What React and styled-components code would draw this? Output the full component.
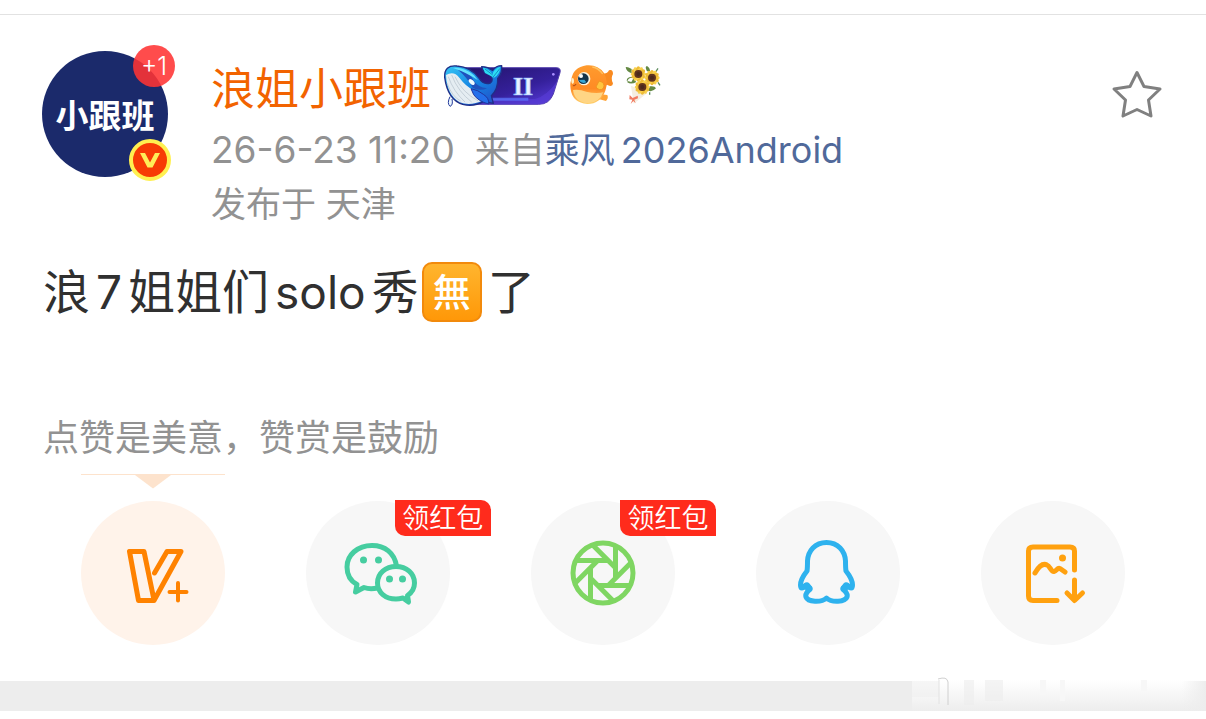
import styled, { createGlobalStyle } from "styled-components";

export default function App() {
  return (
    <>
      <GlobalStyle />
      <StyledPost>
        <StyledHeader>
          <Avatar />
          <StyledInfo>
            <StyledNameRow>
              <StyledName href="#profile">浪姐小跟班</StyledName>
              <StyledBadges>
                <WhaleBadge />
                <FishBadge />
                <FlowerBadge />
              </StyledBadges>
            </StyledNameRow>
            <StyledMeta>
              <StyledTime>26-6-23 11:20</StyledTime>
              <span>
                来自
                <StyledSource href="#source">
                  乘风<StyledClient>2026Android</StyledClient>
                </StyledSource>
              </span>
            </StyledMeta>
            <StyledMeta>发布于 天津</StyledMeta>
          </StyledInfo>
          <StyledFavourite type="button" aria-label="收藏">
            <svg width="52" height="52" viewBox="0 0 52 52" fill="none">
              <path
                d="M26 4.500L33 18.500L49 21L37.500 32L40 48L26 41.500L12 48L14.500 32L3 21L19 18.500Z"
                stroke="#808080"
                strokeWidth="3"
                strokeLinejoin="round"
              />
            </svg>
          </StyledFavourite>
        </StyledHeader>

        <StyledText>
          浪<StyledLatin>7</StyledLatin>姐姐们<StyledLatin>solo</StyledLatin>秀
          <StyledEmoji>無</StyledEmoji>了
        </StyledText>

        <StyledTip>点赞是美意，赞赏是鼓励</StyledTip>

        <StyledActions>
          {actions.map(({ id, label, icon, active, tag }) => (
            <StyledAction key={id}>
              <StyledPointer width="144" height="15" viewBox="0 0 144 15" $visible={active}>
                <path d="M0 0H144V1H90L72 14.500L54 1H0Z" fill="#fde3cd" />
              </StyledPointer>
              <StyledCircle type="button" aria-label={label} $active={active}>
                {icon}
                {tag ? <StyledTag>{tag}</StyledTag> : ""}
              </StyledCircle>
            </StyledAction>
          ))}
        </StyledActions>
      </StyledPost>
      <StyledDivider>
        <Watermark />
      </StyledDivider>
    </>
  );
}

function Avatar() {
  return (
    <StyledAvatar>
      小跟班
      <StyledPlusOne>+1</StyledPlusOne>
      <StyledVerified>
        <svg width="22" height="20" viewBox="0 0 22 20">
          <path d="M1 3H6L11 12.500L16 3H21L13.500 17.500H8.500Z" fill="#ffee58" />
        </svg>
      </StyledVerified>
    </StyledAvatar>
  );
}

function WhaleBadge() {
  return (
    <svg width="118" height="46" viewBox="39 36 354 138">
      <defs>
        <linearGradient id="pill" x1="0" y1="0" x2="1" y2="1">
          <stop offset="0" stopColor="#211265" />
          <stop offset="0.6" stopColor="#35209b" />
          <stop offset="1" stopColor="#5b3fe0" />
        </linearGradient>
        <linearGradient id="whale" x1="0" y1="0" x2="1" y2="1">
          <stop offset="0" stopColor="#35c8f5" />
          <stop offset="0.5" stopColor="#1684e2" />
          <stop offset="1" stopColor="#2545c4" />
        </linearGradient>
      </defs>
      <path
        d="M70 53H378Q394 53 390 68L370 132Q358 163 326 163H100Z"
        fill="url(#pill)"
        stroke="#5643ae"
        strokeWidth="3"
      />
      <path d="M170 147H315Q350 138 380 96Q365 163 326 163H150Z" fill="#5a3dd8" opacity="0.6" />
      <path d="M185 143H295V152H180Z" fill="#5c79ff" opacity="0.7" />
      <circle cx="370" cy="73" r="4" fill="#a98dff" />
      <text
        x="279"
        y="135"
        textAnchor="middle"
        fontFamily="'Liberation Serif', serif"
        fontWeight="700"
        fontSize="78"
        fill="#e8f3ff"
        stroke="#91b7ff"
        strokeWidth="2"
      >
        II
      </text>
      <path d="M60 140Q50 160 60 169Q70 166 66 147" fill="#eaf6ff" stroke="#263b9c" strokeWidth="3" />
      <path
        d="M44 82Q42 44 81 48Q122 51 146 83Q160 106 181 99Q192 92 181 75Q158 71 155 50Q174 51 188 61Q198 47 215 47Q218 69 203 85Q205 117 184 137L190 160L160 155Q132 171 98 163Q53 149 44 82Z"
        fill="url(#whale)"
        stroke="#202e86"
        strokeWidth="4"
        strokeLinejoin="round"
      />
      <path d="M48 75Q71 61 88 83Q109 111 130 119Q142 143 159 151Q121 170 89 157Q51 135 48 75Z" fill="#e5edf2" />
      <path
        d="M55 80Q70 124 105 156M65 75Q84 125 125 156M75 80Q96 127 145 153M51 99Q66 140 92 153"
        fill="none"
        stroke="#b3c0ca"
        strokeWidth="2"
      />
      <path d="M123 116Q145 120 160 133Q178 144 176 162Q145 154 131 134Z" fill="#246fea" stroke="#20359e" strokeWidth="3" />
      <path d="M82 58Q121 66 132 93Q144 112 171 115Q151 125 128 113Q112 83 82 58Z" fill="#2052bd" />
      <path d="M69 54Q102 50 132 76L144 91Q111 68 69 54Z" fill="#63e2fc" />
      <ellipse cx="125" cy="96" rx="11" ry="6" transform="rotate(45 125 96)" fill="#effcff" />
      <path d="M159 53Q177 56 188 73Q190 56 211 50Q211 72 192 83Q175 74 165 69Z" fill="#2cdcf3" />
      <path d="M188 83L210 55M188 75L165 57" stroke="#168cc5" strokeWidth="3" />
    </svg>
  );
}

function FishBadge() {
  return (
    <svg width="46" height="46" viewBox="414 40 138 138">
      <defs>
        <linearGradient id="fish" x1="0" y1="0" x2="0" y2="1">
          <stop offset="0" stopColor="#ff9b2e" />
          <stop offset="0.6" stopColor="#ff8b24" />
          <stop offset="1" stopColor="#ffd16c" />
        </linearGradient>
      </defs>
      <path d="M500 66Q524 84 534 65Q546 61 546 76Q538 89 546 104Q545 117 528 108L500 132Z" fill="#f98a20" />
      <path d="M510 137L529 139Q533 149 525 157L500 150Z" fill="#ffa335" />
      <path
        d="M421 94Q425 56 467 50Q500 47 519 73Q533 99 523 126Q509 165 469 166Q424 162 419 122Q416 104 421 94Z"
        fill="url(#fish)"
      />
      <path d="M426 124Q445 121 466 129Q493 136 517 131Q505 163 470 164Q430 159 426 124Z" fill="#ffd584" />
      <path d="M484 55Q503 58 515 76" fill="none" stroke="#ffc260" strokeWidth="4" />
      <path d="M504 97Q525 102 517 119Q506 129 495 115Z" fill="#ffc43e" stroke="#f19521" strokeWidth="3" />
      <ellipse cx="459" cy="90" rx="19" ry="20" fill="#fff5de" />
      <circle cx="457" cy="90" r="16" fill="#17354b" />
      <path d="M444 94Q452 108 466 101L460 93Z" fill="#38a7d5" />
      <circle cx="450" cy="82" r="6" fill="#fff" />
      <ellipse cx="425" cy="97" rx="4" ry="9" fill="#fff0c5" />
      <path d="M426 110Q431 113 435 106" fill="none" stroke="#bd5214" strokeWidth="4" />
    </svg>
  );
}

const flowers = [
  { x: 622, y: 76 },
  { x: 663, y: 87 },
  { x: 634, y: 115 },
];

const petals = [0, 30, 60, 90, 120, 150];

function FlowerBadge() {
  return (
    <svg width="40" height="46" viewBox="576 40 120 138">
      <path d="M600 111L650 132L608 165Z" fill="#f5eee0" />
      <path
        d="M602 61Q588 53 584 56Q586 69 602 74ZM606 87Q589 86 589 101Q600 109 616 100ZM647 66Q641 53 648 52Q659 58 657 73ZM657 113Q672 111 675 119Q662 133 650 125ZM601 100L587 96Q588 82 609 86Z"
        fill="#648943"
      />
      <path d="M674 70L681 59M681 101L687 110M656 131V138" stroke="#5c8b5d" strokeWidth="4" />
      {flowers.map(({ x, y }) => (
        <g key={x}>
          {petals.map((angle) => (
            <ellipse
              key={angle}
              cx={x}
              cy={y}
              rx="23"
              ry="9"
              transform={`rotate(${angle} ${x} ${y})`}
              fill={angle % 60 ? "#eebb35" : "#f9d04c"}
            />
          ))}
          <circle cx={x} cy={y} r="12" fill="#60331e" />
          <circle cx={x} cy={y} r="6" fill="#4a291c" />
        </g>
      ))}
      <path d="M605 148L596 139L595 152L604 153L599 166L607 157L614 164L610 153L621 149L620 141Z" fill="#f17b60" />
    </svg>
  );
}

function VipIcon() {
  return (
    <StyledIcon viewBox="0 0 144 144" stroke="#ff8200">
      <path d="M73.500 72L86 50.500H100L73 99.500H57.500L48.500 50.500H63L73 99" />
      <path d="M97 82V99.500M88.500 91H105.500" strokeWidth="4" />
    </StyledIcon>
  );
}

function WechatIcon() {
  return (
    <StyledIcon viewBox="0 0 144 144" stroke="#46cda0">
      <path d="M90.500 65C88.500 52 79 44.500 66 44.500C51.500 44.500 41 54 41 66C41 73.500 44.500 80 51 83.500L49.500 91L58 86.500C62 88 67 88 71.500 87" />
      <path d="M90 65.500C79.500 65.500 71.500 72.500 71.500 82C71.500 91.500 79.500 98 90 98C92.500 98 95 97.500 97 97L102.500 101L101.500 94.500C106 91.500 108.500 87 108.500 82C108.500 72.500 100.500 65.500 90 65.500Z" />
      <g fill="#46cda0" stroke="none">
        <circle cx="57.500" cy="59" r="3.500" />
        <circle cx="72.500" cy="59" r="3.500" />
        <circle cx="83.500" cy="78" r="3.500" />
        <circle cx="96.500" cy="78" r="3.500" />
      </g>
    </StyledIcon>
  );
}

const blades = [0, 45, 90, 135, 180, 225, 270, 315];

function MomentsIcon() {
  return (
    <StyledIcon viewBox="0 0 144 144" stroke="#7fd662">
      <circle cx="72" cy="72" r="30" />
      {blades.map((angle) => (
        <path key={angle} d="M46 59.500H76" transform={`rotate(${angle} 72 72)`} />
      ))}
    </StyledIcon>
  );
}

function QqIcon() {
  return (
    <StyledIcon viewBox="0 0 144 144" stroke="#2eb2ee">
      <path d="M70.500 41.500C59 41.500 52 50 51.500 60C51.500 64 51.500 67 51 70C47 75 44.500 79 44.500 84C44.500 88 46.500 88 50 84L54 87C53 90 48.500 92 50 96C52 101 65 102 70.500 97C76 102 89 101 91 96C92.500 92 88 90 87 87L91 84C94.500 88 96.500 88 96.500 84C96.500 79 94 75 90 70C89.500 67 89.500 64 89.500 60C89 50 82 41.500 70.500 41.500Z" />
      <path d="M51 85L53 88M90 85L88 88" strokeWidth="7" />
    </StyledIcon>
  );
}

function SaveImageIcon() {
  return (
    <StyledIcon viewBox="0 0 144 144" stroke="#ffa10f">
      <path d="M93.500 69V50Q93.500 46 89 46H52Q47.500 46 47.500 50V95Q47.500 99.500 52 99.500H76" />
      <path d="M54 72C58 65 62 62 66 64C69 65 70 71 73 70.500C76 70 76 66.500 79 67.500L84 71" />
      <path d="M93.500 79V99M86 92L93.500 99.500L101.500 92" />
      <circle cx="81.500" cy="57" r="3.500" fill="#ffa10f" stroke="none" />
    </StyledIcon>
  );
}

// faded account mark at the end of the divider
function Watermark() {
  return (
    <svg width="294" height="34" viewBox="0 0 294 34" aria-hidden="true">
      <defs>
        <linearGradient id="fade" x1="0" y1="0" x2="0" y2="1">
          <stop offset="0" stopColor="#fff" />
          <stop offset="1" stopColor="#ededed" />
        </linearGradient>
        <linearGradient id="edge" x1="0" y1="0" x2="1" y2="0">
          <stop offset="0" stopColor="#ededed" stopOpacity="0" />
          <stop offset="1" stopColor="#ededed" />
        </linearGradient>
      </defs>
      <path d="M0 3H294V34H0Z" fill="url(#fade)" />
      <path d="M270 4H294V34H270Z" fill="url(#edge)" />
      <path d="M0 4H27V20H0Z" fill="#ededed" opacity="0.5" />
      <path d="M52 3H62V28H52ZM73 3H91V24H73Z" fill="#ededed" opacity="0.6" />
      <path d="M128 3H134V18H128ZM148 3H153V24H148ZM229 3H235V14H229Z" fill="#f7f7f7" />
      <path d="M26 2Q35 -1 36 5V28" stroke="#d0d0d0" fill="none" />
      <path d="M27 3V27" stroke="#e2e2e2" />
    </svg>
  );
}

const actions = [
  { id: "vip", label: "V+", icon: <VipIcon />, active: true },
  { id: "wechat", label: "微信", icon: <WechatIcon />, tag: "领红包" },
  { id: "moments", label: "朋友圈", icon: <MomentsIcon />, tag: "领红包" },
  { id: "qq", label: "QQ", icon: <QqIcon /> },
  { id: "image", label: "保存图片", icon: <SaveImageIcon /> },
];

const GlobalStyle = createGlobalStyle`
  * {
    box-sizing: border-box;
  }
  body {
    margin: 0;
    padding: 14px 0 8px;
    background: #fff;
    font-family: Inter, "Noto Sans CJK SC", sans-serif;
    font-weight: 400;
  }
  button {
    padding: 0;
    border: 0;
    background: none;
    font: inherit;
  }
  a {
    text-decoration: none;
  }
  svg {
    display: block;
    flex: none;
  }
`;

const StyledPost = styled.article`
  border-top: 1px solid #e2e2e2;
  padding: 36px 40px;
`;

const StyledHeader = styled.header`
  display: flex;
  align-items: flex-start;
  padding: 0 2px;
`;

const StyledAvatar = styled.div`
  position: relative;
  display: flex;
  flex: none;
  align-items: center;
  justify-content: center;
  width: 126px;
  height: 126px;
  border-radius: 50%;
  background: #1b2a6b;
  color: #fff;
  font-size: 33px;
  font-weight: 700;
`;

const StyledPlusOne = styled.span`
  position: absolute;
  top: -6px;
  right: -7px;
  width: 42px;
  border-radius: 50%;
  background: rgba(255, 51, 51, 0.88);
  font-size: 25px;
  font-weight: 300;
  line-height: 42px;
  text-align: center;
`;

const StyledVerified = styled.span`
  position: absolute;
  right: -3px;
  bottom: -4px;
  display: flex;
  align-items: center;
  justify-content: center;
  width: 42px;
  height: 42px;
  border: 4px solid #fff050;
  border-radius: 50%;
  background: #f73b05;
`;

const StyledInfo = styled.div`
  flex: 1;
  padding: 5px 0 0 43px;
`;

const StyledNameRow = styled.div`
  display: flex;
  align-items: flex-start;
  gap: 12px;
  height: 64px;
  margin-bottom: 3px;
`;

const StyledBadges = styled.div`
  display: flex;
  gap: 8px;
  padding-top: 6px;
`;

const StyledName = styled.a`
  color: #f26300;
  font-size: 44px;
  line-height: 66px;
`;

const StyledMeta = styled.div`
  display: flex;
  gap: 20px;
  color: #929292;
  font-size: 35px;
  line-height: 54px;
  white-space: nowrap;
`;

const StyledTime = styled.time`
  font-size: 37px;
`;

const StyledSource = styled.a`
  color: #50699a;
`;

const StyledClient = styled.span`
  margin-left: 6px;
  font-size: 36px;
`;

const StyledLatin = styled.span`
  margin: 0 6px;
  font-size: 46px;
`;

const StyledFavourite = styled.button`
  margin: 17px 1px 0 0;
`;

const StyledText = styled.p`
  display: flex;
  align-items: center;
  margin: 29px 3px 0;
  color: #303030;
  font-size: 47px;
  line-height: 64px;
`;

const StyledEmoji = styled.span`
  width: 60px;
  height: 60px;
  margin: 0 6px 0 3px;
  border: 2px solid #f28a0c;
  border-radius: 10px;
  background: linear-gradient(#ffb52e, #ff9808);
  color: #fff;
  font-size: 38px;
  font-weight: 500;
  line-height: 56px;
  text-align: center;
`;

const StyledTip = styled.p`
  margin: 88px 3px 10px;
  color: #929292;
  font-size: 36px;
  line-height: 52px;
`;

const StyledActions = styled.div`
  display: grid;
  grid-template-columns: repeat(5, 1fr);
`;

const StyledAction = styled.div`
  display: flex;
  flex-direction: column;
  align-items: center;
  gap: 12px;
`;

const StyledPointer = styled.svg`
  visibility: ${({ $visible }) => ($visible ? "visible" : "hidden")};
`;

const StyledCircle = styled.button`
  position: relative;
  width: 144px;
  height: 144px;
  border-radius: 50%;
  background: ${({ $active }) => ($active ? "#fff3ea" : "#f7f7f7")};
`;

const StyledIcon = styled.svg`
  width: 144px;
  height: 144px;
  fill: none;
  stroke-width: 5px;
  stroke-linecap: round;
  stroke-linejoin: round;
`;

const StyledTag = styled.span`
  position: absolute;
  top: -1px;
  left: 89px;
  width: 96px;
  height: 36px;
  border-radius: 0 10px 0 10px;
  background: #ff2b1c;
  color: #fff;
  font-size: 27px;
  font-weight: 350;
  line-height: 38px;
  text-align: center;
  white-space: nowrap;
`;

const StyledDivider = styled.footer`
  display: flex;
  align-items: flex-end;
  justify-content: flex-end;
  height: 30px;
  background: #ededed;
`;
